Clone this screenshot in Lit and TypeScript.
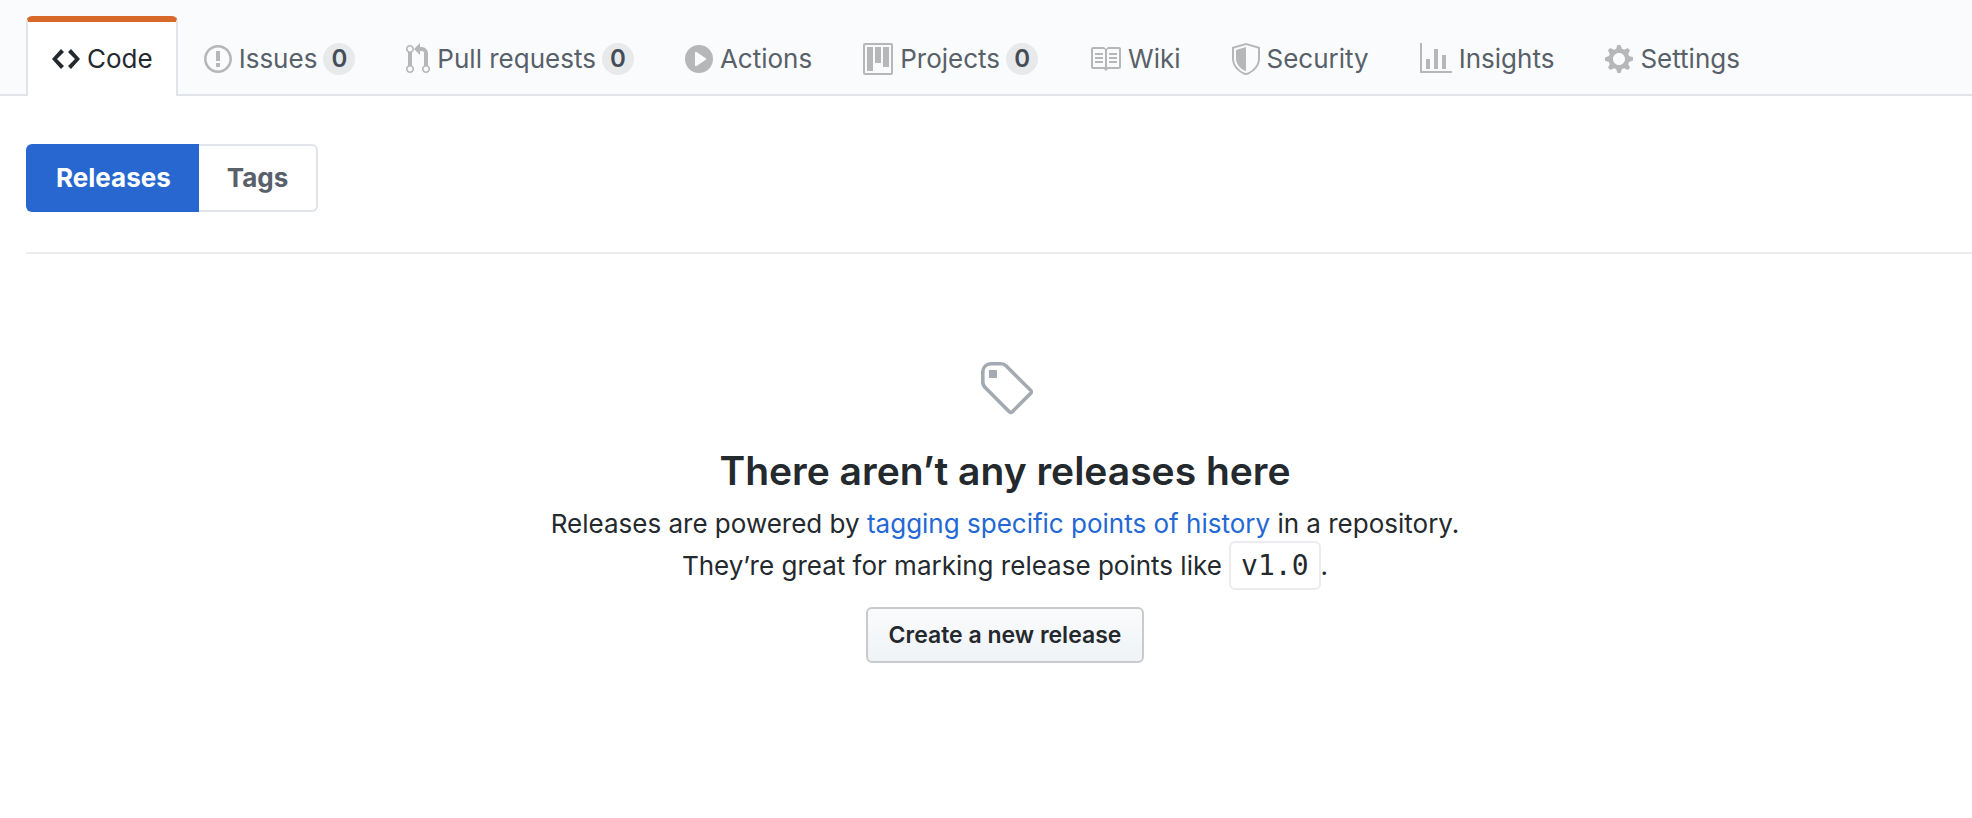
import { LitElement, html, css, svg, nothing } from "lit";
import { customElement } from "lit/decorators.js";
import { classMap } from "lit/directives/class-map.js";

interface Tab {
  label: string;
  icon: keyof typeof ICONS;
  count?: number;
  selected?: boolean;
}

const ICONS = {
  code: { width: 14, path: "M9.5 3L8 4.5 11.5 8 8 11.5 9.5 13 14 8 9.5 3zm-5 0L0 8l4.5 5L6 11.5 2.5 8 6 4.5 4.5 3z" },
  issue: { width: 14, path: "M7 2.3c3.14 0 5.7 2.56 5.7 5.7s-2.56 5.7-5.7 5.7A5.71 5.71 0 0 1 1.3 8c0-3.14 2.56-5.7 5.7-5.7zM7 1C3.14 1 0 4.14 0 8s3.14 7 7 7 7-3.14 7-7-3.14-7-7-7zm1 3H6v5h2V4zm0 6H6v2h2v-2z" },
  pull: { width: 12, path: "M11 11.28V5c-.03-.78-.34-1.47-.94-2.06C9.46 2.35 8.78 2.03 8 2H7V0L4 3l3 3V4h1c.27.02.48.11.69.31.21.2.3.42.31.69v6.28A1.993 1.993 0 0 0 10 15a1.993 1.993 0 0 0 1-3.72zm-1 2.92c-.66 0-1.2-.55-1.2-1.2 0-.65.55-1.2 1.2-1.2.65 0 1.2.55 1.2 1.2 0 .65-.55 1.2-1.2 1.2zM4 3c0-1.11-.89-2-2-2a1.993 1.993 0 0 0-1 3.72v6.56A1.993 1.993 0 0 0 2 15a1.993 1.993 0 0 0 1-3.72V4.72c.59-.34 1-.98 1-1.72zm-.8 10c0 .66-.55 1.2-1.2 1.2-.65 0-1.2-.55-1.2-1.2 0-.65.55-1.2 1.2-1.2.65 0 1.2.55 1.2 1.2zM2 4.2C1.34 4.2.8 3.65.8 3c0-.65.55-1.2 1.2-1.2.65 0 1.2.55 1.2 1.2 0 .65-.55 1.2-1.2 1.2z" },
  play: { width: 14, path: "M14 8A7 7 0 1 1 0 8a7 7 0 0 1 14 0zm-8.223 3.482l4.599-3.066a.5.5 0 0 0 0-.832L5.777 4.518A.5.5 0 0 0 5 4.934v6.132a.5.5 0 0 0 .777.416z" },
  project: { width: 15, path: "M10 12h3V2h-3v10zm-4-2h3V2H6v8zm-4 4h3V2H2v12zm-1 1h13V1H1v14zM14 0H1a1 1 0 0 0-1 1v14a1 1 0 0 0 1 1h13a1 1 0 0 0 1-1V1a1 1 0 0 0-1-1z" },
  book: { width: 16, path: "M3 5h4v1H3V5zm0 3h4V7H3v1zm0 2h4V9H3v1zm11-5h-4v1h4V5zm0 2h-4v1h4V7zm0 2h-4v1h4V9zm2-6v9c0 .55-.45 1-1 1H9.5l-1 1-1-1H2c-.55 0-1-.45-1-1V3c0-.55.45-1 1-1h5.5l1 1 1-1H15c.55 0 1 .45 1 1zm-8 .5L7.5 3H2v9h6V3.5zm7-.5H9.5l-.5.5V12h6V3z" },
  shield: { width: 14, path: "M0 2l7-2 7 2v6.02C14 12.69 8.69 16 7 16c-1.69 0-7-3.31-7-7.98V2zm1 .75L7 1l6 1.75v5.268C13 12.104 8.449 15 7 15c-1.449 0-6-2.896-6-6.982V2.75zm1 .75L7 2v12c-1.207 0-5-2.482-5-5.985V3.5z" },
  graph: { width: 16, path: "M16 14v1H0V0h1v14h15zM5 13H3V8h2v5zm4 0H7V3h2v10zm4 0h-2V6h2v7z" },
  gear: { width: 14, path: "M14 8.77v-1.6l-1.94-.64-.45-1.09.88-1.84-1.13-1.13-1.81.91-1.09-.45-.69-1.92h-1.6l-.63 1.94-1.11.45-1.84-.88-1.13 1.13.91 1.81-.45 1.09L0 7.23v1.59l1.94.64.45 1.09-.88 1.84 1.13 1.13 1.81-.91 1.09.45.69 1.92h1.59l.63-1.94 1.11-.45 1.84.88 1.13-1.13-.92-1.81.47-1.09L14 8.75v.02zM7 11c-1.66 0-3-1.34-3-3s1.34-3 3-3 3 1.34 3 3-1.34 3-3 3z" },
  tag: { width: 14, path: "M7.685 1.72a2.49 2.49 0 0 0-1.76-.726H3.48A2.5 2.5 0 0 0 .994 3.48v2.456c0 .656.269 1.292.726 1.76l6.024 6.024a.99.99 0 0 0 1.402 0l4.563-4.563a.99.99 0 0 0 0-1.402L7.685 1.72zM2.366 7.048a1.54 1.54 0 0 1-.467-1.123V3.48c0-.874.716-1.58 1.58-1.58h2.456c.418 0 .825.159 1.123.467l6.104 6.094-4.702 4.702-6.094-6.114zm.626-4.066h1.989v1.989H2.982V2.982h.01z" },
};

const TABS: Tab[] = [
  { label: "Code", icon: "code", selected: true },
  { label: "Issues", icon: "issue", count: 0 },
  { label: "Pull requests", icon: "pull", count: 0 },
  { label: "Actions", icon: "play" },
  { label: "Projects", icon: "project", count: 0 },
  { label: "Wiki", icon: "book" },
  { label: "Security", icon: "shield" },
  { label: "Insights", icon: "graph" },
  { label: "Settings", icon: "gear" },
];

/** Draws one icon of the 16-unit-high set at the given pixel height. */
const icon = (name: keyof typeof ICONS, height: number) => {
  const { width, path } = ICONS[name];
  return html`<svg
    class="icon"
    viewBox="0 0 ${width} 16"
    width=${(width * height) / 16}
    height=${height}
    aria-hidden="true"
  >${svg`<path fill-rule="evenodd" d=${path}></path>`}</svg>`;
};

@customElement("repo-nav")
export class RepoNav extends LitElement {
  static styles = css`
    :host {
      display: block;
      background: #fafbfc;
      box-shadow: inset 0 -2px #e1e4e8;
    }
    .tabs {
      display: flex;
      padding: 16px 0 0 26px;
    }
    .tab {
      box-sizing: border-box;
      display: flex;
      align-items: center;
      height: 80px;
      padding: 0 23px 0 24px;
      border: 2px solid transparent;
      border-top-width: 6px;
      border-bottom: 0;
      border-radius: 6px 6px 0 0;
      color: #586069;
      font-size: 26px;
      line-height: 36px;
      white-space: nowrap;
      text-decoration: none;
    }
    .selected {
      color: #24292e;
      background: #fff;
      border-color: #d9692a #e1e4e8 transparent;
    }
    .icon {
      flex: none;
      margin-right: 7px;
      fill: #b6b7b9;
    }
    .selected .icon {
      fill: #24292e;
    }
    .count {
      box-sizing: border-box;
      min-width: 32px;
      margin-left: 6px;
      border-radius: 16px;
      background: #e8e9eb;
      color: #444d56;
      font-size: 24px;
      font-weight: 600;
      line-height: 32px;
      text-align: center;
    }
  `;

  render() {
    return html`<nav class="tabs" aria-label="Repository">
      ${TABS.map(
        (tab) => html`<a
          href="#"
          class=${classMap({ tab: true, selected: !!tab.selected })}
          aria-current=${tab.selected ? "page" : nothing}
          >${icon(tab.icon, 32)}<span>${tab.label}</span>${tab.count === undefined
            ? nothing
            : html`<span class="count">${tab.count}</span>`}</a
        >`
      )}
    </nav>`;
  }
}

@customElement("app-root")
export class AppRoot extends LitElement {
  static styles = css`
    :host {
      display: block;
      min-height: 100vh;
      background: #fff;
      color: #24292e;
      font-family: Inter, "Liberation Sans", sans-serif;
      font-size: 26px;
      line-height: 42px;
    }
    .page {
      padding: 48px 0 0 26px;
    }
    .subnav {
      display: flex;
      padding-bottom: 40px;
      border-bottom: 2px solid #eaecef;
      font-weight: 700;
      line-height: 40px;
    }
    .segment {
      padding: 12px 28px;
      border: 2px solid #e1e4e8;
      border-left: 0;
      border-radius: 0 6px 6px 0;
      color: #586069;
      text-decoration: none;
    }
    .active {
      border: 2px solid #2767cf;
      border-right-width: 0;
      border-radius: 6px 0 0 6px;
      background: #2767cf;
      color: #fff;
    }
    .blank {
      display: flex;
      flex-direction: column;
      align-items: center;
      padding: 104px 0 0 12px;
      text-align: center;
    }
    .icon {
      fill: #a3aab1;
    }
    h1 {
      margin: 25px 0 0;
      font-size: 39px;
      font-weight: 600;
      line-height: 48px;
    }
    p {
      margin: 8px 0 0;
    }
    .link {
      color: #2468d4;
      text-decoration: none;
    }
    code {
      padding: 6px 10px;
      border: 2px solid #eaecef;
      border-radius: 6px;
      background: #fff;
      font-family: "DejaVu Sans Mono", monospace;
      font-size: 28px;
    }
    .create {
      margin-top: 20px;
      padding: 6px 21px;
      border: 2px solid #c8cacd;
      border-radius: 6px;
      background: linear-gradient(#fafbfc, #eff3f6);
      color: #24292e;
      font: 600 23px/40px Inter, "Liberation Sans", sans-serif;
    }
  `;

  render() {
    return html`
      <repo-nav></repo-nav>
      <main class="page">
        <nav class="subnav" aria-label="Releases and tags">
          <a class="segment active" href="#" aria-current="page">Releases</a>
          <a class="segment" href="#">Tags</a>
        </nav>
        <section class="blank">
          ${icon("tag", 64)}
          <h1>There aren’t any releases here</h1>
          <p>
            Releases are powered by
            <a class="link" href="#">tagging specific points of history</a> in a repository.<br />
            They’re great for marking release points like <code>v1.0</code>.
          </p>
          <button class="create" type="button">Create a new release</button>
        </section>
      </main>
    `;
  }
}
